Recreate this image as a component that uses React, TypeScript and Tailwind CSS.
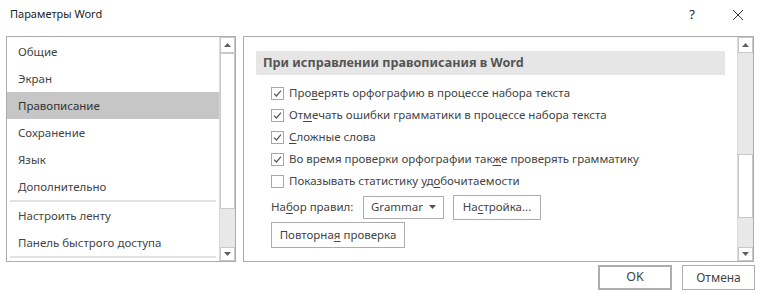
import React from "react";

const font = { fontFamily: '"Segoe UI", "Noto Sans", "Open Sans", sans-serif' };

function U({ children }: { children: React.ReactNode }) {
  return <span className="underline underline-offset-[2px]">{children}</span>;
}

function Check({ checked }: { checked: boolean }) {
  return (
    <span className="w-[13px] h-[13px] border border-[#a8a8a8] bg-white flex items-center justify-center shrink-0">
      {checked && (
        <svg width="9" height="9" viewBox="0 0 9 9">
          <path d="M1 4.6 L3.4 7 L8 1.6" fill="none" stroke="#555" strokeWidth="1.2" />
        </svg>
      )}
    </span>
  );
}

function Scrollbar({ thumbTop, thumbH }: { thumbTop: number; thumbH: number }) {
  return (
    <div className="w-[16px] h-full flex flex-col bg-[#e8e8e8] border-l border-[#d9d9d9]">
      <div className="h-[16px] border border-[#c8c8c8] bg-white flex items-center justify-center">
        <svg width="7" height="4" viewBox="0 0 7 4"><path d="M0 4 L3.5 0 L7 4Z" fill="#606060" /></svg>
      </div>
      <div className="flex-1 relative">
        <div
          className="absolute left-0 right-0 border border-[#c8c8c8] bg-white"
          style={{ top: thumbTop, height: thumbH }}
        />
      </div>
      <div className="h-[14px] bg-white border border-[#c8c8c8] flex items-center justify-center">
        <svg width="7" height="4" viewBox="0 0 7 4"><path d="M0 0 L3.5 4 L7 0Z" fill="#606060" /></svg>
      </div>
    </div>
  );
}

export default function App() {
  const items1 = ["Общие", "Экран", "Правописание", "Сохранение", "Язык", "Дополнительно"];
  const items2 = ["Настроить ленту", "Панель быстрого доступа"];
  return (
    <div className="w-[760px] h-[294px] bg-white text-[11.5px] text-[#444] flex flex-col overflow-hidden" style={font}>
      <div className="h-[36px] flex items-start pt-[5px] pl-[10px] pr-[16px]">
        <span className="text-[11px] text-[#222] mt-[1px]">Параметры Word</span>
        <span className="ml-auto mr-[37px] text-[#222] text-[13px]">?</span>
        <svg width="12" height="12" viewBox="0 0 12 12" className="mt-[4px]">
          <path d="M1 1 L11 11 M11 1 L1 11" stroke="#333" strokeWidth="1" />
        </svg>
      </div>
      <div className="flex px-[6px] gap-[7px] h-[226px]">
        <div className="w-[230px] h-full border border-[#ababab] flex">
          <div className="flex-1 pt-[1px]">
            {items1.map((t) => (
              <div
                key={t}
                className={`h-[27px] flex items-center pl-[11px] ${t === "Правописание" ? "bg-[#c6c6c6] text-[#333]" : ""}`}
              >
                {t}
              </div>
            ))}
            <div className="mx-[3px] h-[2px] bg-[#e2e2e2]" />
            {items2.map((t) => (
              <div key={t} className="h-[27px] flex items-center pl-[11px]">
                {t}
              </div>
            ))}
            <div className="mx-[3px] h-[2px] bg-[#e2e2e2]" />
          </div>
          <Scrollbar thumbTop={0} thumbH={156} />
        </div>
        <div className="flex-1 h-full border border-[#ababab] flex">
          <div className="flex-1 pt-[14px] pl-[12px] pr-[12px]">
            <div className="h-[24px] bg-[#e6e6e6] flex items-center pl-[7px] font-bold text-[12.6px] text-[#555]">
              При исправлении правописания в Word
            </div>
            <div className="mt-[7px] pl-[15px] flex flex-col">
              <div className="h-[22px] flex items-center gap-[5px]"><Check checked /><span>Про<U>в</U>ерять орфографию в процессе набора текста</span></div>
              <div className="h-[22px] flex items-center gap-[5px]"><Check checked /><span>От<U>м</U>ечать ошибки грамматики в процессе набора текста</span></div>
              <div className="h-[22px] flex items-center gap-[5px]"><Check checked /><span><U>С</U>ложные слова</span></div>
              <div className="h-[22px] flex items-center gap-[5px]"><Check checked /><span>Во время проверки орфографии так<U>ж</U>е проверять грамматику</span></div>
              <div className="h-[22px] flex items-center gap-[5px]"><Check checked={false} /><span>Показывать статистику уд<U>о</U>бочитаемости</span></div>
              <div className="mt-[3px] h-[24px] flex items-center">
                <span className="w-[92px]">На<U>б</U>ор правил:</span>
                <div className="w-[81px] h-[23px] border border-[#acacac] flex items-center pl-[7px] pr-[7px]">
                  <span>Grammar</span>
                  <svg width="7" height="4" viewBox="0 0 7 4" className="ml-auto"><path d="M0 0 L3.5 4 L7 0Z" fill="#555" /></svg>
                </div>
                <div className="ml-[9px] w-[88px] h-[25px] border border-[#acacac] flex items-center justify-center">
                  <span>На<U>с</U>тройка...</span>
                </div>
              </div>
              <div className="mt-[3px] w-[134px] h-[26px] border border-[#acacac] flex items-center justify-center">
                <span>Повторна<U>я</U> проверка</span>
              </div>
            </div>
          </div>
          <Scrollbar thumbTop={101} thumbH={64} />
        </div>
      </div>
      <div className="flex justify-end gap-[10px] pr-[5px] pt-[3px]">
        <div className="w-[74px] h-[25px] border-2 border-[#adadad] flex items-center justify-center text-[12.5px]">OK</div>
        <div className="w-[73px] h-[25px] border border-[#adadad] flex items-center justify-center text-[12px]">Отмена</div>
      </div>
    </div>
  );
}
